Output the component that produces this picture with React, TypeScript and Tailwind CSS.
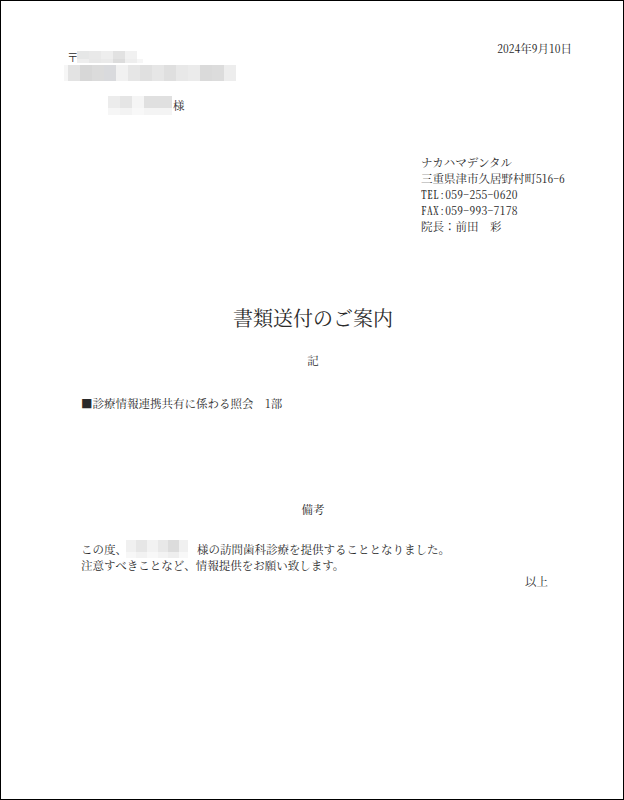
import React from "react";

type Cell = { w: string; c: string };

function Blur({ rows, className }: { rows: Cell[][]; className?: string }) {
  return (
    <span className={"inline-flex flex-col align-middle " + (className ?? "")}>
      {rows.map((r, i) => (
        <span key={i} className="flex">
          {r.map((cell, j) => (
            <span key={j} className={cell.w + " " + cell.c} />
          ))}
        </span>
      ))}
    </span>
  );
}

const blurPostal: Cell[][] = [
  [
    { w: "w-[12px] h-[8px]", c: "bg-[#e6e7e7]" },
    { w: "w-[12px] h-[8px]", c: "bg-[#e9e9e9]" },
    { w: "w-[12px] h-[8px]", c: "bg-[#eeeeee]" },
    { w: "w-[12px] h-[8px]", c: "bg-[#e2e2e2]" },
    { w: "w-[12px] h-[8px]", c: "bg-[#f1f1f1]" },
  ],
  [
    { w: "w-[12px] h-[4px]", c: "bg-[#eeeeee]" },
    { w: "w-[12px] h-[4px]", c: "bg-[#e8e8e8]" },
    { w: "w-[12px] h-[4px]", c: "bg-[#eaeaea]" },
    { w: "w-[12px] h-[4px]", c: "bg-[#dcdcdc]" },
    { w: "w-[12px] h-[4px]", c: "bg-[#eeeeee]" },
    { w: "w-[6px] h-[4px]", c: "bg-[#f6f6f6]" },
  ],
];

const blurAddr: Cell[][] = [
  [
    { w: "w-[4px] h-[16px]", c: "bg-[#f6f6f6]" },
    { w: "w-[12px] h-[16px]", c: "bg-[#e3e3e3]" },
    { w: "w-[12px] h-[16px]", c: "bg-[#d7d7d7]" },
    { w: "w-[12px] h-[16px]", c: "bg-[#dbdbdb]" },
    { w: "w-[12px] h-[16px]", c: "bg-[#d9dadd]" },
    { w: "w-[12px] h-[16px]", c: "bg-[#f1f1f1]" },
    { w: "w-[12px] h-[16px]", c: "bg-[#e6e6e6]" },
    { w: "w-[12px] h-[16px]", c: "bg-[#e0e0e0]" },
    { w: "w-[12px] h-[16px]", c: "bg-[#e6e6e6]" },
    { w: "w-[12px] h-[16px]", c: "bg-[#dfdfdf]" },
    { w: "w-[12px] h-[16px]", c: "bg-[#e8e8e8]" },
    { w: "w-[12px] h-[16px]", c: "bg-[#ebebeb]" },
    { w: "w-[12px] h-[16px]", c: "bg-[#dadada]" },
    { w: "w-[12px] h-[16px]", c: "bg-[#dcdcdc]" },
    { w: "w-[12px] h-[16px]", c: "bg-[#ededed]" },
  ],
];

const blurName: Cell[][] = [
  [
    { w: "w-[12px] h-[12px]", c: "bg-[#ececec]" },
    { w: "w-[12px] h-[12px]", c: "bg-[#e5e5e5]" },
    { w: "w-[12px] h-[12px]", c: "bg-[#f5f5f5]" },
    { w: "w-[28px] h-[12px]", c: "bg-[#e0e0e0]" },
  ],
  [
    { w: "w-[12px] h-[7px]", c: "bg-[#f6f6f6]" },
    { w: "w-[12px] h-[7px]", c: "bg-[#f3f3f3]" },
    { w: "w-[12px] h-[7px]", c: "bg-[#f8f8f8]" },
    { w: "w-[28px] h-[7px]", c: "bg-[#f4f4f4]" },
  ],
];

const blurBody: Cell[][] = [
  [
    { w: "w-[10px] h-[12px]", c: "bg-[#f0f0f0]" },
    { w: "w-[11px] h-[12px]", c: "bg-[#e6e6e6]" },
    { w: "w-[11px] h-[12px]", c: "bg-[#f2f2f2]" },
    { w: "w-[10px] h-[12px]", c: "bg-[#e8e8e8]" },
    { w: "w-[11px] h-[12px]", c: "bg-[#dcdcdc]" },
    { w: "w-[9px] h-[12px]", c: "bg-[#f0f0f0]" },
  ],
  [
    { w: "w-[10px] h-[6px]", c: "bg-[#f7f7f7]" },
    { w: "w-[11px] h-[6px]", c: "bg-[#f2f2f2]" },
    { w: "w-[11px] h-[6px]", c: "bg-[#f8f8f8]" },
    { w: "w-[10px] h-[6px]", c: "bg-[#f3f3f3]" },
    { w: "w-[11px] h-[6px]", c: "bg-[#eeeeee]" },
    { w: "w-[9px] h-[6px]", c: "bg-[#f8f8f8]" },
  ],
];

export default function App() {
  return (
    <div className="w-[624px] h-[800px] border border-black bg-white text-[#2a2a2a] text-[11.5px] leading-[16px] font-['Noto_Serif_CJK_JP','Liberation_Serif','Noto_Sans_CJK_JP',serif]">
      <div className="flex justify-between pt-[39px] pr-[51px]">
        <div className="pt-[9px] pl-[66px]">
          <div className="flex items-center h-[16px]">
            <span className="w-[10px]">〒</span>
            <Blur rows={blurPostal} />
          </div>
          <div className="flex items-center h-[16px] -ml-[3px]">
            <Blur rows={blurAddr} />
          </div>
          <div className="flex items-center h-[16px] mt-[16px] pl-[41px]">
            <Blur rows={blurName} />
            <span className="ml-[1px]">様</span>
          </div>
        </div>
        <div className="h-[16px] [font-feature-settings:'hwid']">2024年9月10日</div>
      </div>

      <div className="pl-[420px] mt-[41px] flex flex-col">
        <div>ナカハマデンタル</div>
        <div className="[font-feature-settings:'hwid']">三重県津市久居野村町516-6</div>
        <div className="[font-feature-settings:'hwid'] tracking-[0.3px]">TEL:059-255-0620</div>
        <div className="[font-feature-settings:'hwid'] tracking-[0.3px]">FAX:059-993-7178</div>
        <div>院長：前田　彩</div>
      </div>

      <div className="mt-[70px] text-center text-[20px] leading-[28px] pl-[2px]">書類送付のご案内</div>
      <div className="mt-[20px] text-center pl-[2px]">記</div>
      <div className="mt-[27px] pl-[80px]">
        ■診療情報連携共有に係わる照会　<span className="[font-feature-settings:'hwid']">1</span>部
      </div>
      <div className="mt-[90px] text-center pl-[2px]">備考</div>
      <div className="mt-[24px] pl-[80px]">
        <div className="flex items-center h-[16px]">
          <span>この度、</span>
          <Blur rows={blurBody} className="-ml-[1px] mr-[9px]" />
          <span>様の訪問歯科診療を提供することとなりました。</span>
        </div>
        <div>注意すべきことなど、情報提供をお願い致します。</div>
      </div>
      <div className="text-right pr-[75px]">以上</div>
    </div>
  );
}
